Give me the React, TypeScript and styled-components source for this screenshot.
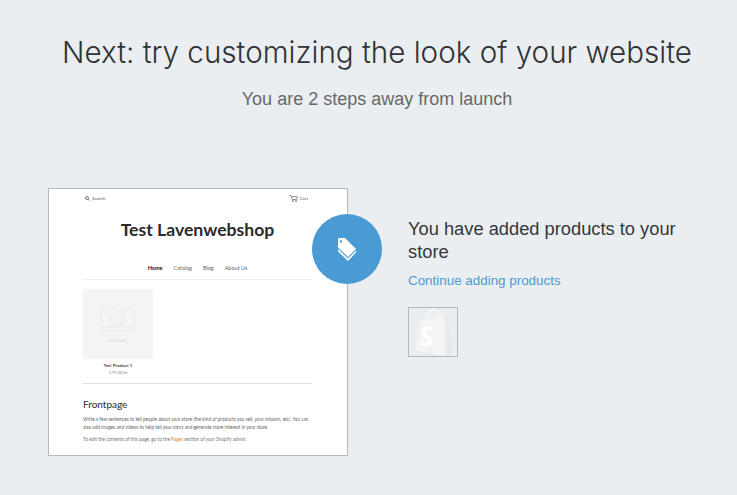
import React from "react";
import styled, { createGlobalStyle } from "styled-components";

const GlobalStyle = createGlobalStyle`
  html, body {
    margin: 0;
    padding: 0;
    background: #ebeef0;
  }
  body {
    font-family: "Liberation Sans", Arial, sans-serif;
    overflow: hidden;
  }
`;

const App: React.FC = () => {
  return (
    <Page>
      <GlobalStyle />
      <Header>
        <Title>Next: try customizing the look of your website</Title>
        <Subtitle>You are 2 steps away from launch</Subtitle>
      </Header>
      <Content>
        <PreviewColumn>
          <Preview>
            <TopBar>
              <TopItem>
                <svg width="5" height="5" viewBox="0 0 10 10" fill="none" stroke="#444" strokeWidth="1.4">
                  <circle cx="4" cy="4" r="3" />
                  <path d="M6.5 6.5L9.5 9.5" />
                </svg>
                Search
              </TopItem>
              <TopItem>
                <svg width="9" height="7" viewBox="0 0 14 11" fill="none" stroke="#555" strokeWidth="1">
                  <path d="M0 1h3l2 6h7l1-4.500H4" />
                  <circle cx="6" cy="9.500" r="1" />
                  <circle cx="11" cy="9.500" r="1" />
                </svg>
                Cart
              </TopItem>
            </TopBar>
            <ShopName>Test Lavenwebshop</ShopName>
            <Nav>
              <NavLink $active>Home</NavLink>
              <NavLink>Catalog</NavLink>
              <NavLink>Blog</NavLink>
              <NavLink>About Us</NavLink>
            </Nav>
            <Rule $color="#f0f0f0" />
            <Product>
              <ProductImage>
                <svg width="36" height="26" viewBox="0 0 38 28" fill="none" stroke="#e8e8e8" strokeWidth="0.8">
                  <path d="M1 5h7l2-3h9l2 2h8l1-2h4l1 3h2v21H1z" />
                  <circle cx="19" cy="14" r="8" />
                  <circle cx="19" cy="14" r="5.500" />
                  <path d="M1 23h36" />
                </svg>
                <ImageLabel>NO IMAGE</ImageLabel>
              </ProductImage>
              <ProductName>Test Product 1</ProductName>
              <ProductPrice>179.00 kr</ProductPrice>
            </Product>
            <Rule $color="#dfe0e0" />
            <PageHeading>Frontpage</PageHeading>
            <BodyText>
              Write a few sentences to tell people about your store (the kind of products you sell, your mission, etc). You can
              <br />
              also add images and videos to help tell your story and generate more interest in your store.
            </BodyText>
            <BodyNote>
              To edit the contents of this page, go to the <em>Pages</em> section of your Shopify admin.
            </BodyNote>
          </Preview>
          <Badge>
            <svg width="18" height="23" viewBox="0 0 18 23" fill="#fff">
              <path fillRule="evenodd" d="M0 1.500Q0 0 1.500 0H7L18 11L10 19L0 9.500ZM3 2.300a1.200 1.200 0 1 0 0 2.400a1.200 1.200 0 0 0 0-2.400Z" />
              <path d="M0 11L10 20.500L18 12.500V14.500L10 23L0 13.500Z" />
            </svg>
          </Badge>
        </PreviewColumn>
        <Info>
          <InfoTitle>You have added products to your store</InfoTitle>
          <InfoLink>Continue adding products</InfoLink>
          <LogoBox>
            <svg width="38" height="48" viewBox="0 0 38 48">
              <path fill="none" stroke="#f3f4f5" strokeWidth="2.500" d="M11 13C12 6 15 1.500 19 1.500C23 1.500 25 5 25.500 11" />
              <path fill="#f3f4f5" d="M0 42L6 13L11 11.500L30 7V48Z" />
              <path fill="#e6e9eb" d="M30 7L33 8L38 44L30 48Z" />
              <path fill="none" stroke="#fff" strokeWidth="4" d="M17 21.500C14 19.500 9 20 9 24C9 28 15 29 15 33C15 37 10 37 6.500 35" />
            </svg>
          </LogoBox>
        </Info>
      </Content>
    </Page>
  );
};

const Page = styled.div`
  width: 737px;
  height: 495px;
  overflow: hidden;
  background: #ebeef0;
`;

const Header = styled.header`
  display: flex;
  flex-direction: column;
  align-items: center;
  padding-top: 33px;
  padding-left: 17px;
`;

const Title = styled.h1`
  margin: 0;
  font-family: "Inter", "Liberation Sans", sans-serif;
  font-size: 29.600px;
  line-height: 38px;
  font-weight: 300;
  color: #2f3336;
  white-space: nowrap;
`;

const Subtitle = styled.h2`
  margin: 17px 0 0;
  font-size: 18px;
  line-height: 22px;
  font-weight: 400;
  color: #66686a;
  white-space: nowrap;
`;

const Content = styled.main`
  display: flex;
  align-items: flex-start;
  margin-top: 78px;
  padding-left: 48px;
`;

const PreviewColumn = styled.div`
  position: relative;
  flex: none;
`;

const Preview = styled.section`
  box-sizing: border-box;
  width: 300px;
  height: 268px;
  padding: 5px 35px 0 34px;
  background: #fff;
  border: 1px solid #b5b9bc;
  font-family: "Lato", sans-serif;
`;

const TopBar = styled.div`
  display: flex;
  justify-content: space-between;
  padding: 0 4px 0 2px;
  height: 8px;
`;

const TopItem = styled.span`
  display: flex;
  align-items: center;
  gap: 2px;
  font-size: 4.500px;
  color: #555;
`;

const ShopName = styled.div`
  margin-top: 15px;
  text-align: center;
  font-family: "Lato", sans-serif;
  font-size: 17.600px;
  line-height: 26px;
  font-weight: 700;
  color: #2c2a2b;
`;

const Nav = styled.nav`
  display: flex;
  justify-content: center;
  gap: 11px;
  margin-top: 21px;
`;

const NavLink = styled.span<{ $active?: boolean }>`
  font-size: 5.500px;
  line-height: 9px;
  color: ${(p) => (p.$active ? "#111" : "#666")};
  font-weight: ${(p) => (p.$active ? 700 : 400)};
`;

const Rule = styled.hr<{ $color: string }>`
  margin: 6px 0 0;
  border: 0;
  height: 1px;
  background: ${(p) => p.$color};
`;

const Product = styled.div`
  display: flex;
  flex-direction: column;
  align-items: center;
  width: 70px;
  margin-top: 9px;
  height: 88px;
`;

const ProductImage = styled.div`
  display: flex;
  flex-direction: column;
  align-items: center;
  justify-content: center;
  gap: 7px;
  width: 70px;
  height: 70px;
  background: #f4f4f4;
`;

const ImageLabel = styled.span`
  font-size: 3.500px;
  line-height: 4px;
  color: #d8d8d8;
`;

const ProductName = styled.span`
  margin-top: 3px;
  font-size: 4.500px;
  line-height: 7px;
  font-weight: 700;
  color: #444;
`;

const ProductPrice = styled.span`
  font-size: 4.500px;
  line-height: 7px;
  color: #888;
`;

const PageHeading = styled.h3`
  margin: 13px 0 0;
  font-size: 10px;
  line-height: 14px;
  font-weight: 400;
  color: #2c2a2b;
`;

const BodyText = styled.p`
  margin: 5px 0 0;
  font-size: 4.700px;
  line-height: 7.500px;
  color: #666;
  white-space: nowrap;
`;

const BodyNote = styled.p`
  margin: 4.500px 0 0;
  font-size: 4.700px;
  line-height: 7.500px;
  color: #777;
  white-space: nowrap;

  em {
    font-style: normal;
    color: #c9952f;
  }
`;

const Badge = styled.div`
  position: absolute;
  left: 264px;
  top: 26px;
  width: 70px;
  height: 70px;
  display: flex;
  align-items: center;
  justify-content: center;
  border-radius: 50%;
  background: #4a9ad4;
`;

const Info = styled.aside`
  width: 300px;
  margin-left: 60px;
  padding-top: 29px;
`;

const InfoTitle = styled.h4`
  margin: 0;
  font-size: 18.300px;
  line-height: 23px;
  font-weight: 400;
  color: #33373a;
`;

const InfoLink = styled.a`
  display: block;
  margin-top: 9px;
  font-size: 13.400px;
  line-height: 18px;
  color: #4a9ad4;
`;

const LogoBox = styled.div`
  box-sizing: border-box;
  display: flex;
  align-items: flex-end;
  justify-content: center;
  width: 50px;
  height: 50px;
  margin-top: 17px;
  padding-left: 2px;
  border: 1px solid #b5b9bc;
`;

export default App;
